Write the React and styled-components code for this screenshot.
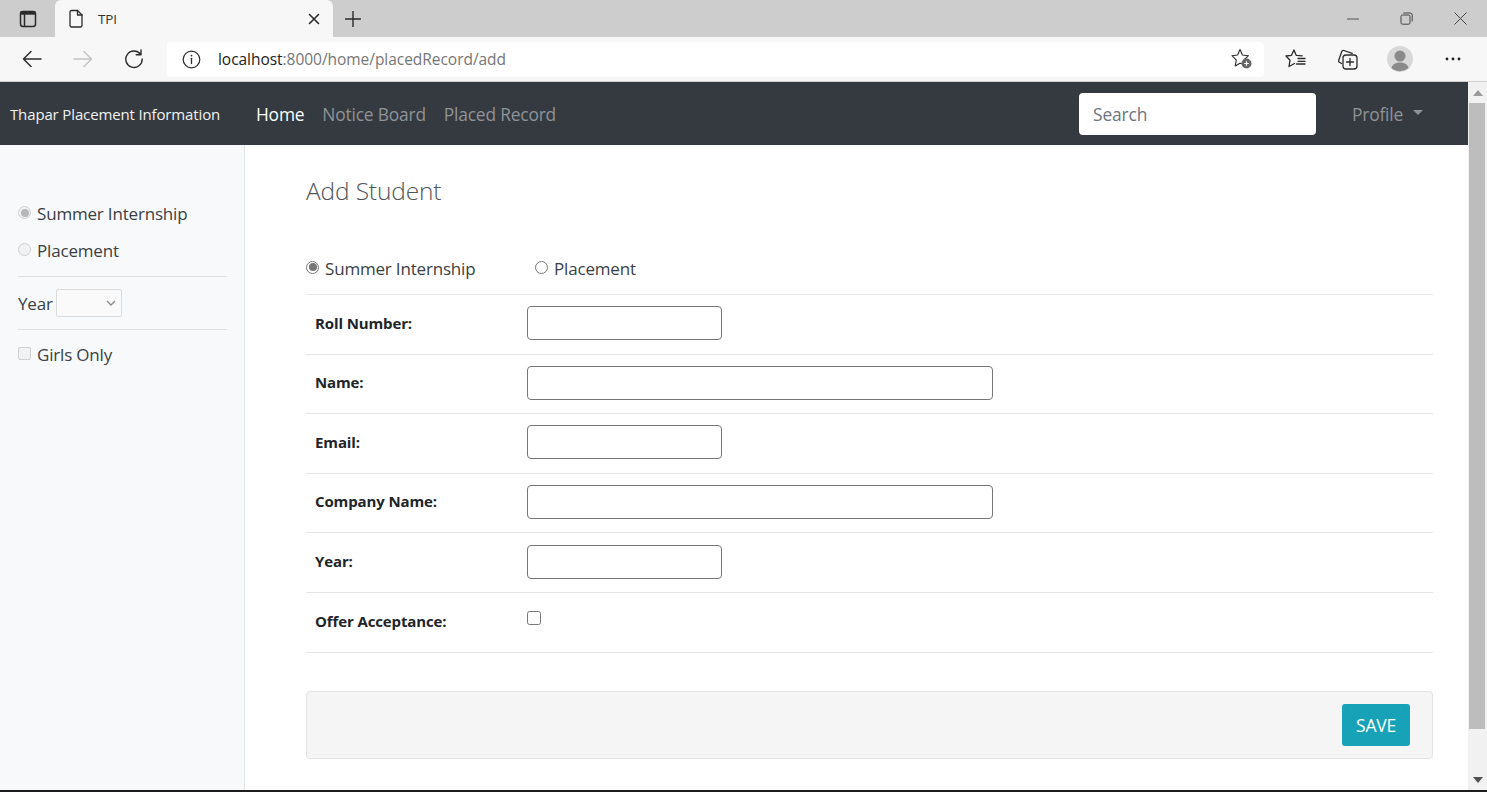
import React from "react";
import styled, { createGlobalStyle } from "styled-components";

const Global = createGlobalStyle`
  html, body { margin: 0; padding: 0; height: 100%; overflow: hidden; background: #fff; }
  body { font-family: "Open Sans", "Noto Sans", sans-serif; color: #212529; }
  * { box-sizing: border-box; }
`;

const Window = styled.div`
  width: 1487px; height: 792px; display: flex; flex-direction: column; overflow: hidden;
  border-bottom: 2px solid #1c1c1c;
`;
const TabStrip = styled.div`
  height: 37px; background: #cdcdcd; display: flex; align-items: flex-end; flex: none;
`;
const TabToggle = styled.div`
  width: 55px; height: 37px; display: flex; align-items: center; justify-content: center;
`;
const Tab = styled.div`
  width: 278px; height: 37px; background: #f7f7f7; border-radius: 6px 6px 0 0; display: flex; align-items: center;
  padding: 0 13px 0 13px;
`;
const TabTitle = styled.span`
  font-size: 13.5px; color: #333; margin-left: 14px; flex: 1; letter-spacing: -0.2px;
`;
const NewTab = styled.div`
  width: 40px; height: 37px; display: flex; align-items: center; justify-content: center;
`;
const WinButtons = styled.div`
  margin-left: auto; display: flex; height: 37px; align-items: center; padding-right: 0;
`;
const WinButton = styled.div`
  width: 53.5px; height: 37px; display: flex; align-items: center; justify-content: center;
`;
const Toolbar = styled.div`
  height: 45px; background: #f7f7f7; border-bottom: 1px solid #cfcfcf; display: flex; align-items: center; flex: none;
`;
const NavIcon = styled.div`
  width: 51px; height: 44px; display: flex; align-items: center; justify-content: center; flex: none;
  margin-left: ${p => p.$ml || 0}px;
`;
const AddressBar = styled.div`
  width: 1097px; height: 35px; margin-left: 8px; background: #fff; border-radius: 4px; display: flex; align-items: center;
  padding: 0 11px 0 15px; flex: none;
`;
const Url = styled.div`
  font-family: "Open Sans", sans-serif; font-size: 15.5px; margin-left: 17px; flex: 1; color: #767676; letter-spacing: -0.04px;
  & b { font-weight: 400; color: #222; }
`;
const ToolIcons = styled.div`
  display: flex; align-items: center; margin-left: 5px;
`;
const ToolIcon = styled.div`
  width: 52.5px; height: 44px; display: flex; align-items: center; justify-content: center;
`;
const Viewport = styled.div`
  flex: 1; display: flex; min-height: 0;
`;
const Page = styled.div`
  flex: 1; display: flex; flex-direction: column; min-width: 0;
`;
const Navbar = styled.nav`
  height: 63px; background: #343a40; display: flex; align-items: center; flex: none; padding-left: 10px;
`;
const Brand = styled.div`
  color: #f2f2f2; font-size: 15px; width: 246px; letter-spacing: -0.14px;
`;
const NavLink = styled.div`
  color: ${p => (p.$active ? "#fff" : "#8f9296")}; font-size: 17.4px; margin-right: 18px; letter-spacing: -0.2px;
`;
const Search = styled.div`
  margin-left: auto; margin-top: 1px; width: 237px; height: 42px; background: #fff; border-radius: 4px; color: #6c757d; font-size: 17.4px;
  display: flex; align-items: center; padding-left: 14px; letter-spacing: -0.15px;
`;
const Profile = styled.div`
  color: #8f9296; font-size: 17.4px; width: 152px; padding-left: 36px; display: flex; align-items: center; letter-spacing: -0.2px;
  &::after { content: ""; margin-left: 10px; border-top: 5px solid #8f9296; border-left: 5.5px solid transparent; border-right: 5.5px solid transparent; margin-top: -2px; }
`;
const Body = styled.div`
  flex: 1; display: flex; min-height: 0;
`;
const Sidebar = styled.aside`
  width: 245px; flex: none; background: #f8f9fa; border-right: 1px solid #e3e4e6; padding: 50px 17px 0 18px;
`;
const SideRow = styled.label`
  display: flex; align-items: center; font-size: 17px; color: #3a3f44; height: 37px; letter-spacing: -0.18px;
`;
const SideDivider = styled.hr`
  border: 0; border-top: 1px solid #dfe0e1; margin: ${p => p.$m || "7px 0 0"};
`;
const YearRow = styled.div`
  display: flex; align-items: center; height: 52px; font-size: 17px; color: #3a3f44; letter-spacing: -0.18px;
`;
const YearSelect = styled.div`
  width: 66px; height: 28px; margin-left: 3px; border: 1px solid #dcdcdc; background: #fafafa; border-radius: 2px;
  display: flex; align-items: center; justify-content: flex-end; padding-right: 5px;
`;
const Dot = styled.span`
  width: 13px; height: 13px; border-radius: 50%; flex: none; margin-right: 6px; margin-top: -2px;
  border: 1px solid ${p => (p.$disabled ? "#cfd0d1" : "#767676")}; background: #fff; position: relative;
  ${p => p.$disabled && "background: #f2f2f2;"}
  ${p => p.$on && `&::after { content: ""; position: absolute; inset: 1.5px; border-radius: 50%; background: ${p.$disabled ? "#b8b8b8" : "#767676"}; }`}
`;
const Square = styled.span`
  width: 13px; height: 13px; border-radius: 2px; flex: none; margin-right: 6px; margin-top: -2px;
  border: 1px solid ${p => (p.$disabled ? "#cfd0d1" : "#767676")}; background: ${p => (p.$disabled ? "#f2f2f2" : "#fff")};
`;
const Main = styled.main`
  flex: 1; padding: 29px 35px 0 61px; min-width: 0;
`;
const Title = styled.h2`
  margin: 0; font-weight: 300; font-size: 24.5px; line-height: 34px; color: #50555a; letter-spacing: -0.15px;
`;
const TypeRow = styled.div`
  display: flex; align-items: center; margin-top: 44px; height: 43px; padding-bottom: 10px; border-bottom: 1px solid #e9eaeb; font-size: 17px; color: #3a3f44; letter-spacing: -0.18px;
`;
const TypeItem = styled.label`
  display: flex; align-items: center; width: 229px;
`;
const Row = styled.div`
  display: flex; align-items: center; height: 59.6px; border-bottom: 1px solid #e4e5e6; padding: 0 0 2px 9px;
`;
const Label = styled.div`
  font-weight: 700; font-size: 15px; width: 212px; color: #212529; letter-spacing: -0.12px; padding-bottom: 1.5px;
  font-family: "Open Sans", sans-serif;
`;
const Input = styled.div`
  width: ${p => (p.$wide ? 466 : 195)}px; height: 34px; border: 1px solid #767676; border-radius: 4px; background: #fff;
`;
const Check = styled.span`
  width: 13.5px; height: 13.5px; border: 1px solid #767676; border-radius: 2.5px; background: #fff; display: block; margin-top: -7px;
`;
const Footer = styled.div`
  height: 68px; margin-top: 38px; background: #f5f5f5; border: 1px solid #e3e3e3; border-radius: 4px; display: flex; align-items: center; justify-content: flex-end;
  padding-right: 22px;
`;
const Save = styled.div`
  width: 68px; height: 42px; background: #17a2b8; color: #fff; border-radius: 3px; font-size: 17.5px; display: flex; align-items: center; justify-content: center; letter-spacing: -0.2px;
`;
const Scrollbar = styled.div`
  width: 19px; flex: none; background: #f1f1f1; display: flex; flex-direction: column;
`;
const ArrowBox = styled.div`
  height: ${p => p.$h || 20}px; display: flex; align-items: center; justify-content: center; flex: none;
`;
const Thumb = styled.div`
  height: 626px; background: #bdbdbd; margin: 0 2px 0 1px; flex: none;
`;
const Spacer = styled.div`flex: 1;`;

const S = { fill: "none", stroke: "#2b2b2b", strokeWidth: 1.3, strokeLinecap: "round", strokeLinejoin: "round" };

const rows = [
  ["Roll Number:", false], ["Name:", true], ["Email:", false], ["Company Name:", true], ["Year:", false],
];

export default function App() {
  return (
    <Window>
      <Global />
      <TabStrip>
        <TabToggle>
          <svg width="18" height="18" viewBox="0 0 18 18"><rect x="1.5" y="1.5" width="15" height="15" rx="2.5" {...S} strokeWidth="1.5"/><rect x="1.5" y="1.5" width="15" height="3.2" fill="#2b2b2b"/><path d="M5.5 4v12" {...S} strokeWidth="1.5"/></svg>
        </TabToggle>
        <Tab>
          <svg width="16" height="19" viewBox="0 0 16 19"><path d="M2 3a1.5 1.5 0 0 1 1.5-1.5H9.500L14 6v10.500a1.500 1.500 0 0 1-1.500 1.500h-9A1.500 1.500 0 0 1 2 16.500z" {...S} /><path d="M9.500 1.500V6H14" {...S} /></svg>
          <TabTitle>TPI</TabTitle>
          <svg width="12" height="12" viewBox="0 0 12 12"><path d="M1.500 1.500l9 9M10.500 1.500l-9 9" {...S} strokeWidth="1.6"/></svg>
        </Tab>
        <NewTab>
          <svg width="16" height="16" viewBox="0 0 16 16"><path d="M8 .5v15M.5 8h15" {...S} strokeWidth="1.4"/></svg>
        </NewTab>
        <WinButtons>
          <WinButton><svg width="12" height="2" viewBox="0 0 12 2"><path d="M0 1h12" stroke="#555" strokeWidth="1"/></svg></WinButton>
          <WinButton><svg width="13" height="13" viewBox="0 0 13 13"><rect x="1" y="3" width="9" height="9.200" rx="1.500" fill="none" stroke="#444"/><path d="M3.300 1h6.900a2 2 0 0 1 2 2v6.500" fill="none" stroke="#444"/></svg></WinButton>
          <WinButton><svg width="13" height="13" viewBox="0 0 13 13"><path d="M.5.5l12 12M12.500.5l-12 12" stroke="#444" strokeWidth="1"/></svg></WinButton>
        </WinButtons>
      </TabStrip>
      <Toolbar>
        <NavIcon $ml={6}>
          <svg width="20" height="18" viewBox="0 0 20 18"><path d="M19 9H1.500M9 1.500L1.500 9 9 16.500" {...S} strokeWidth="1.5"/></svg>
        </NavIcon>
        <NavIcon>
          <svg width="20" height="18" viewBox="0 0 20 18"><path d="M1 9h17.500M11 1.500L18.500 9 11 16.500" {...S} stroke="#c4c4c4" strokeWidth="1.5"/></svg>
        </NavIcon>
        <NavIcon>
          <svg width="20" height="20" viewBox="0 0 20 20"><path d="M16.500 5.200A8.200 8.200 0 1 0 18.200 10M17 1v4.800h-4.800" {...S} strokeWidth="1.4"/></svg>
        </NavIcon>
        <AddressBar>
          <svg width="19" height="19" viewBox="0 0 19 19"><circle cx="9.500" cy="9.500" r="8.300" {...S} strokeWidth="1.2"/><path d="M9.500 8.300v5.200" {...S} strokeWidth="1.3"/><circle cx="9.500" cy="5.600" r=".9" fill="#2b2b2b"/></svg>
          <Url><b>localhost</b>:8000/home/placedRecord/add</Url>
          <svg width="22" height="22" viewBox="0 0 22 22"><path d="M9 1.500l2.400 5.500 6.100.7-4.500 4.300 1 4.500-5-1.300-4.800 2.800 1.100-5.800L1 7.700l5.600-.7z" {...S} strokeWidth="1.1"/><circle cx="15.500" cy="15.500" r="5" fill="#666"/><path d="M13.200 15.500h4.600M15.500 13.200v4.600" stroke="#fff" strokeWidth="1.200"/></svg>
        </AddressBar>
        <ToolIcons>
          <ToolIcon>
            <svg width="21" height="20" viewBox="0 0 21 20"><path d="M9 1l-2.500 5.300L1 7l4 4.300L4 17.500l5.500-3M9 1l2.200 5.300 6 .5M13 9.500h7M13 12.300h7M11.500 15h8.500" {...S} strokeWidth="1.3"/></svg>
          </ToolIcon>
          <ToolIcon>
            <svg width="21" height="21" viewBox="0 0 21 21"><path d="M4.500 14.500l-2-1.200a1.600 1.600 0 0 1-.8-2L4.800 2.500a1.600 1.600 0 0 1 2-1L15.200 4.400" {...S} /><rect x="6" y="6" width="14" height="14" rx="3" {...S}/><path d="M13 9.500v7M9.500 13h7" {...S}/></svg>
          </ToolIcon>
          <ToolIcon>
            <svg width="26" height="26" viewBox="0 0 26 26"><circle cx="13" cy="13" r="13" fill="#d8d8d8"/><circle cx="13" cy="10" r="5.500" fill="#8a8a8a"/><path d="M4.500 22c1-4 4.500-5.500 8.500-5.500s7.500 1.500 8.500 5.500a13 13 0 0 1-17 0z" fill="#8a8a8a"/></svg>
          </ToolIcon>
          <ToolIcon>
            <svg width="16" height="4" viewBox="0 0 16 4"><circle cx="2" cy="2" r="1.400" fill="#222"/><circle cx="8" cy="2" r="1.400" fill="#222"/><circle cx="14" cy="2" r="1.400" fill="#222"/></svg>
          </ToolIcon>
        </ToolIcons>
      </Toolbar>
      <Viewport>
        <Page>
          <Navbar>
            <Brand>Thapar Placement Information</Brand>
            <NavLink $active>Home</NavLink>
            <NavLink>Notice Board</NavLink>
            <NavLink>Placed Record</NavLink>
            <Search>Search</Search>
            <Profile>Profile</Profile>
          </Navbar>
          <Body>
            <Sidebar>
              <SideRow><Dot $on $disabled />Summer Internship</SideRow>
              <SideRow><Dot $disabled />Placement</SideRow>
              <SideDivider />
              <YearRow>Year<YearSelect>
                <svg width="10" height="6" viewBox="0 0 10 6"><path d="M1 1l4 4 4-4" fill="none" stroke="#8a8a8a" strokeWidth="1.300"/></svg>
              </YearSelect></YearRow>
              <SideDivider $m="0 0 6px" />
              <SideRow><Square $disabled />Girls Only</SideRow>
            </Sidebar>
            <Main>
              <Title>Add Student</Title>
              <TypeRow>
                <TypeItem><Dot $on />Summer Internship</TypeItem>
                <TypeItem><Dot />Placement</TypeItem>
              </TypeRow>
              {rows.map(([l, wide]) => (
                <Row key={l}><Label>{l}</Label><Input $wide={wide} /></Row>
              ))}
              <Row><Label>Offer Acceptance:</Label><Check /></Row>
              <Footer><Save>SAVE</Save></Footer>
            </Main>
          </Body>
        </Page>
        <Scrollbar>
          <ArrowBox $h={21}><svg width="10" height="6" viewBox="0 0 10 6"><path d="M0 6l5-6 5 6z" fill="#9a9a9a"/></svg></ArrowBox>
          <Thumb />
          <Spacer />
          <ArrowBox><svg width="10" height="6" viewBox="0 0 10 6"><path d="M0 0l5 6 5-6z" fill="#505050"/></svg></ArrowBox>
        </Scrollbar>
      </Viewport>
    </Window>
  );
}
